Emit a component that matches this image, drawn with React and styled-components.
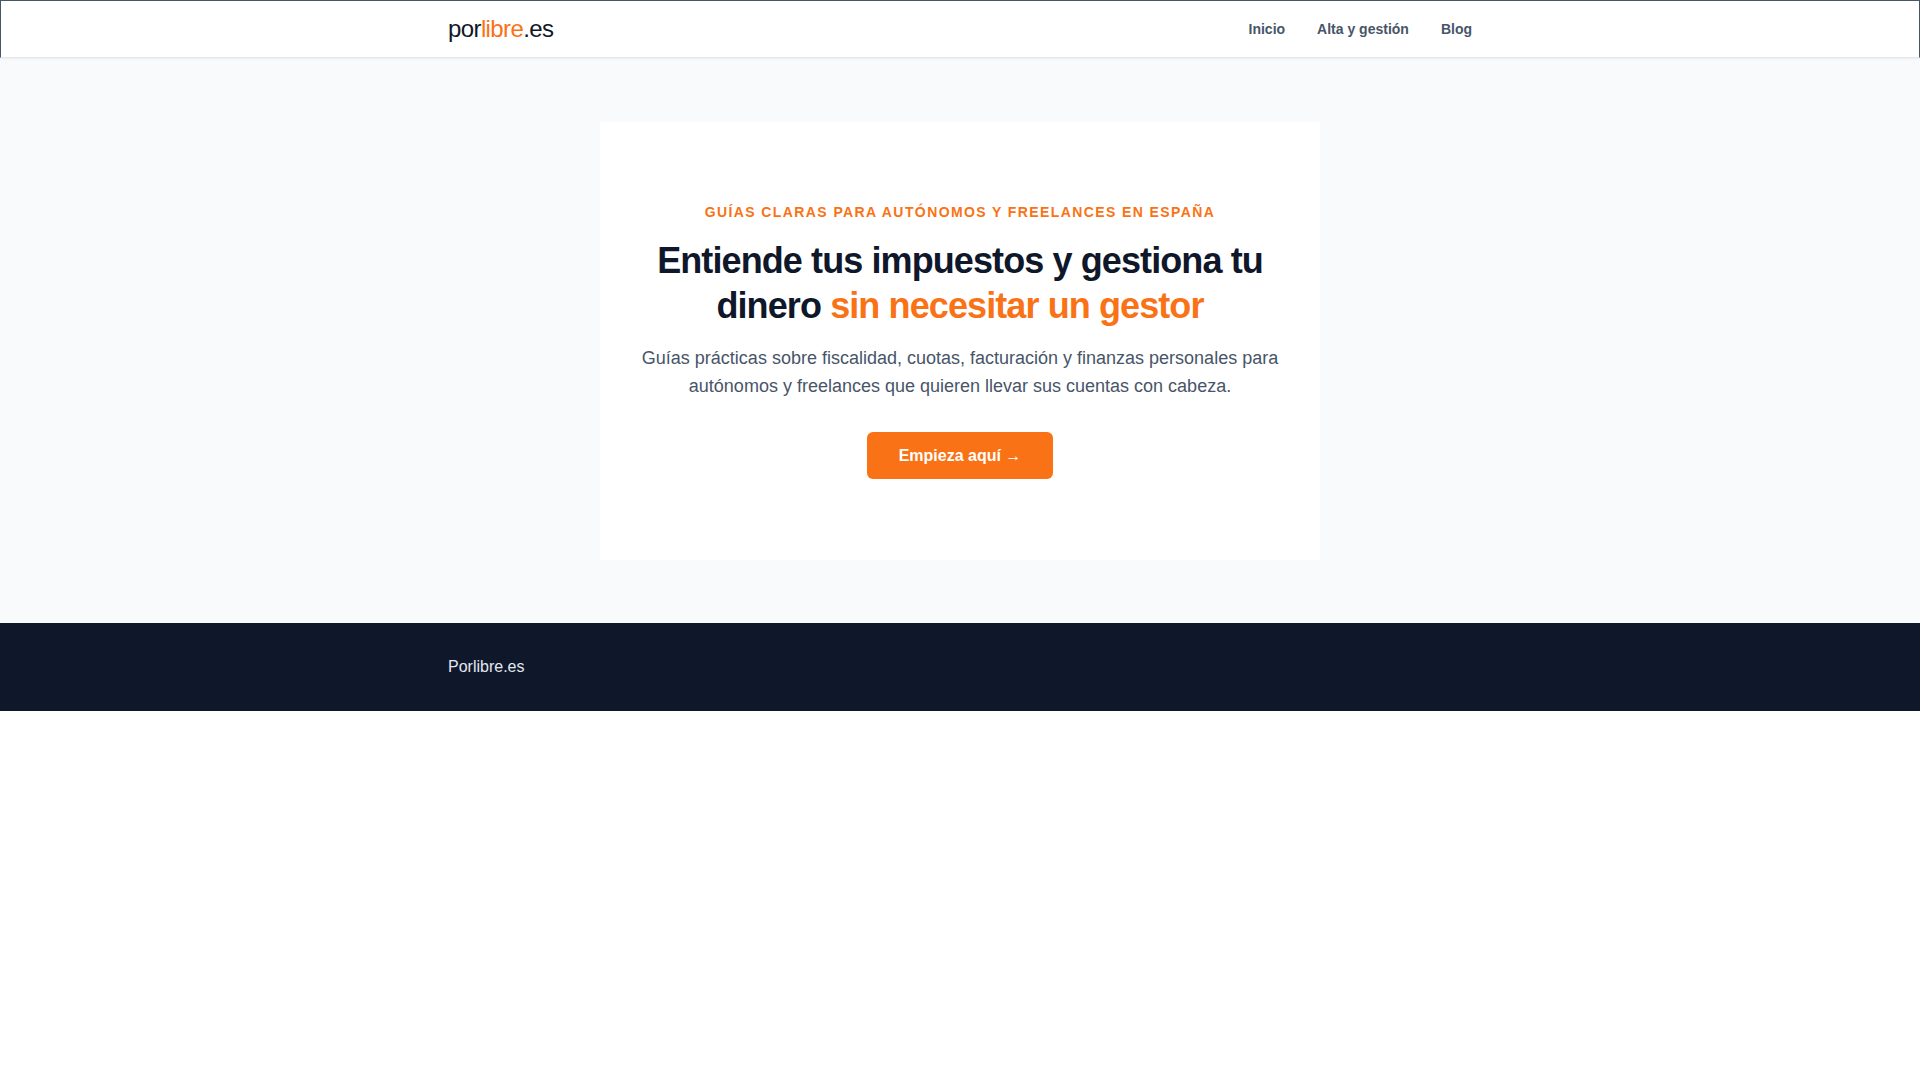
import React from "react";
import styled, { createGlobalStyle } from "styled-components";

const Global = createGlobalStyle`
  * { box-sizing: border-box; }
  html, body { margin: 0; padding: 0; background: #ffffff; }
  body { font-family: "Liberation Sans", Arial, sans-serif; color: #0f172a; }
`;

const Header = styled.header`
  height: 58px;
  background: #ffffff;
  border: 1px solid #475569;
  border-bottom: 1px solid #e2e8f0;
  box-shadow: 0 1px 2px rgba(15, 23, 42, 0.06);
  position: relative;
  z-index: 1;
`;

const Container = styled.div`
  max-width: 1024px;
  margin: 0 auto;
  height: 100%;
  display: flex;
  align-items: center;
  justify-content: space-between;
`;

const Logo = styled.a`
  font-size: 24px;
  letter-spacing: -0.025em;
  color: #0f172a;
  text-decoration: none;
  line-height: 1;
`;

const Accent = styled.span`
  color: #f97316;
`;

const Nav = styled.nav`
  display: flex;
  gap: 32px;
`;

const NavLink = styled.a`
  font-size: 14px;
  font-weight: 700;
  color: #475569;
  text-decoration: none;
`;

const Main = styled.main`
  background: #f8fafc;
  padding: 64px 0 63px;
  display: flex;
  justify-content: center;
`;

const Card = styled.section`
  width: 720px;
  background: #ffffff;
  padding: 80px 40px 81px;
  display: flex;
  flex-direction: column;
  align-items: center;
  text-align: center;
`;

const Eyebrow = styled.p`
  margin: 0;
  font-size: 14px;
  line-height: 20px;
  font-weight: 700;
  letter-spacing: 0.1em;
  text-transform: uppercase;
  color: #f97316;
`;

const Title = styled.h1`
  margin: 16px 0 0;
  font-size: 36px;
  line-height: 45px;
  font-weight: 700;
  letter-spacing: -0.025em;
  color: #0f172a;
`;

const Lead = styled.p`
  margin: 16px 0 0;
  font-size: 18px;
  line-height: 28px;
  color: #475569;
`;

const Button = styled.a`
  margin-top: 32px;
  display: inline-flex;
  align-items: center;
  justify-content: center;
  height: 47px;
  padding: 0 32px;
  border-radius: 6px;
  background: #f97316;
  color: #ffffff;
  font-size: 16px;
  font-weight: 700;
  text-decoration: none;
`;

const Footer = styled.footer`
  background: #0f172a;
  height: 88px;
`;

const FooterText = styled.p`
  margin: 0;
  font-size: 16px;
  color: #e2e8f0;
`;

export default function App() {
  return (
    <>
      <Global />
      <Header>
        <Container>
          <Logo href="#">
            por<Accent>libre</Accent>.es
          </Logo>
          <Nav>
            <NavLink href="#">Inicio</NavLink>
            <NavLink href="#">Alta y gestión</NavLink>
            <NavLink href="#">Blog</NavLink>
          </Nav>
        </Container>
      </Header>
      <Main>
        <Card>
          <Eyebrow>Guías claras para autónomos y freelances en España</Eyebrow>
          <Title>
            Entiende tus impuestos y gestiona tu dinero <Accent>sin necesitar un gestor</Accent>
          </Title>
          <Lead>
            Guías prácticas sobre fiscalidad, cuotas, facturación y finanzas personales para
            autónomos y freelances que quieren llevar sus cuentas con cabeza.
          </Lead>
          <Button href="#">Empieza aquí →</Button>
        </Card>
      </Main>
      <Footer>
        <Container>
          <FooterText>Porlibre.es</FooterText>
        </Container>
      </Footer>
    </>
  );
}
